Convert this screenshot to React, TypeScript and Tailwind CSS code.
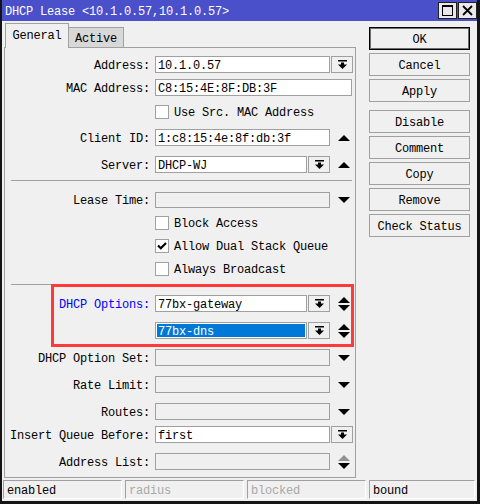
import React from "react";

const mono = "font-['Liberation_Mono','DejaVu_Sans_Mono',monospace] text-[12px] tracking-[-0.2px] leading-none";

function DropIcon() {
  return (
    <svg width="9" height="9" viewBox="0 0 9 9">
      <rect x="0" y="0" width="9" height="1.5" fill="#000" />
      <rect x="3" y="2.5" width="3" height="2.5" fill="#000" />
      <polygon points="0,4.5 9,4.5 4.5,9" fill="#000" />
    </svg>
  );
}

function DropButton() {
  return (
    <div className="ml-px flex h-[17px] w-[22px] items-center justify-center border border-[#a0a0a0] bg-[#f0f0f0]">
      <DropIcon />
    </div>
  );
}

function Up({ color = "#000" }: { color?: string }) {
  return (
    <svg width="12" height="6" viewBox="0 0 12 6">
      <polygon points="0,6 12,6 6,0" fill={color} />
    </svg>
  );
}

function Down({ color = "#000" }: { color?: string }) {
  return (
    <svg width="12" height="6" viewBox="0 0 12 6">
      <polygon points="0,0 12,0 6,6" fill={color} />
    </svg>
  );
}

type Side = "up" | "down" | "updown" | "updown-dim" | null;

function SideArrow({ kind }: { kind: Side }) {
  return (
    <div className="flex w-[26px] flex-col items-center justify-center gap-[2px] pl-[1px]">
      {kind === "up" && <Up />}
      {kind === "down" && <Down />}
      {kind === "updown" && (
        <>
          <Up />
          <Down />
        </>
      )}
      {kind === "updown-dim" && (
        <>
          <Up color="#8c948c" />
          <Down />
        </>
      )}
    </div>
  );
}

function Label({ text, blue }: { text: string; blue?: boolean }) {
  return (
    <div className={`w-[146px] shrink-0 pr-[1px] pt-[2px] text-right ${blue ? "text-[#0000ff]" : "text-black"}`}>
      {text ? `${text}:` : ""}
    </div>
  );
}

function Field({
  value,
  w,
  white = true,
  selected,
}: {
  value?: string;
  w: string;
  white?: boolean;
  selected?: boolean;
}) {
  return (
    <div
      className={`flex h-[17px] items-center border border-[#a0a0a0] ${w} ${
        white ? "bg-white" : "bg-[#f0f0f0]"
      }`}
    >
      {value && (
        <span
          className={`ml-[1px] flex h-[13px] items-center px-[1px] pt-[2px] ${
            selected ? "w-[148px] bg-[#0078d7] text-white" : "text-black"
          }`}
        >
          {value}
        </span>
      )}
    </div>
  );
}

function Check({ label, checked, mt }: { label: string; checked?: boolean; mt: string }) {
  return (
    <div className={`flex h-[17px] items-center ${mt}`}>
      <div className="w-[150px] shrink-0" />
      <div className="flex h-[14px] w-[14px] items-center justify-center border border-[#a0a0a0] bg-white">
        {checked && (
          <svg width="10" height="8" viewBox="0 0 10 8">
            <polyline points="1,3.5 3.8,6.3 9,1" fill="none" stroke="#000" strokeWidth="2.2" />
          </svg>
        )}
      </div>
      <span className="ml-[5px] pt-[2px] text-black">{label}</span>
    </div>
  );
}

function Separator({ mt }: { mt: string }) {
  return <div className={`ml-[6px] h-px w-[341px] bg-[#a0a0a0] ${mt}`} />;
}

function Btn({ text, primary, mt }: { text: string; primary?: boolean; mt?: string }) {
  return (
    <div
      className={`flex h-[23px] w-[101px] items-center justify-center bg-[#f0f0f0] pt-[2px] text-black ${
        primary ? "border border-black shadow-[inset_0_0_0_1px_#6e6e6e]" : "border border-[#a0a0a0]"
      } ${mt ?? ""}`}
    >
      {text}
    </div>
  );
}

function StatusCell({ text, dim, w }: { text: string; dim?: boolean; w: string }) {
  return (
    <div
      className={`flex h-[19px] items-center border-l border-t border-b border-r border-l-[#a0a0a0] border-t-[#a0a0a0] border-b-white border-r-white pl-[3px] pt-[2px] ${w} ${
        dim ? "text-[#a8a8a8]" : "text-black"
      }`}
    >
      {text}
    </div>
  );
}

export default function App() {
  return (
    <div
      className={`${mono} flex h-[504px] w-[480px] flex-col border-b-[3px] border-l-2 border-r-[3px] border-[#141414] bg-[#f0f0f0]`}
    >
      {/* title bar */}
      <div className="flex h-[21px] shrink-0 items-start justify-between bg-[#4a4fca] pl-[3px]">
        <span className="mt-[6px] text-white">DHCP Lease &lt;10.1.0.57,10.1.0.57&gt;</span>
        <div className="mt-[2px] flex gap-[1px]">
          <div className="flex h-[17px] w-[19px] items-center justify-center border border-[#202020] bg-[#ebe7ec]">
            <div className="h-[11px] w-[11px] border border-black border-t-2" />
          </div>
          <div className="flex h-[17px] w-[19px] items-center justify-center border border-[#202020] bg-[#ebe7ec]">
            <svg width="11" height="11" viewBox="0 0 11 11">
              <path d="M1 1 L10 10 M10 1 L1 10" stroke="#000" strokeWidth="1.8" />
            </svg>
          </div>
        </div>
      </div>

      {/* body */}
      <div className="flex h-[457px] shrink-0">
        <div className="ml-[2px] flex w-[352px] flex-col">
          {/* tabs */}
          <div className="flex h-[26px] items-end pl-[1px]">
            <div className="relative z-10 mb-[-1px] flex h-[25px] w-[64px] items-start justify-center border-l border-r border-t border-[#a0a0a0] bg-[#f0f0f0] pt-[6px] text-black">
              General
            </div>
            <div className="flex h-[20px] w-[55px] items-start justify-center border-r border-t border-[#a0a0a0] bg-[#d8d8d8] pt-[5px] text-black">
              Active
            </div>
          </div>

          {/* panel */}
          <div className="relative flex h-[431px] flex-col border border-[#a0a0a0]">
            <div className="flex h-[17px] items-center mt-[8px]">
              <Label text="Address" />
              <div className="ml-[4px] flex">
                <Field value="10.1.0.57" w="w-[175px]" />
                <DropButton />
              </div>
            </div>
            <div className="flex h-[17px] items-center mt-[6px]">
              <Label text="MAC Address" />
              <div className="ml-[4px] flex">
                <Field value="C8:15:4E:8F:DB:3F" w="w-[197px]" />
              </div>
            </div>
            <Check label="Use Src. MAC Address" mt="mt-[7px]" />
            <div className="flex h-[17px] items-center mt-[9px]">
              <Label text="Client ID" />
              <div className="ml-[4px] flex">
                <Field value="1:c8:15:4e:8f:db:3f" w="w-[175px]" />
                <SideArrow kind="up" />
              </div>
            </div>
            <div className="flex h-[17px] items-center mt-[10px]">
              <Label text="Server" />
              <div className="ml-[4px] flex">
                <Field value="DHCP-WJ" w="w-[152px]" />
                <DropButton />
                <SideArrow kind="up" />
              </div>
            </div>

            <Separator mt="mt-[7px]" />

            <div className="flex h-[16px] items-center mt-[11px]">
              <Label text="Lease Time" />
              <div className="ml-[4px] flex h-[16px]">
                <div className="h-[16px] w-[175px] border border-[#a0a0a0] bg-[#f0f0f0]" />
                <SideArrow kind="down" />
              </div>
            </div>
            <Check label="Block Access" mt="mt-[6px]" />
            <Check label="Allow Dual Stack Queue" checked mt="mt-[6px]" />
            <Check label="Always Broadcast" mt="mt-[6px]" />

            <Separator mt="mt-[7px]" />

            <div className="flex h-[17px] items-center mt-[10px]">
              <Label text="DHCP Options" blue />
              <div className="ml-[4px] flex">
                <Field value="77bx-gateway" w="w-[152px]" />
                <DropButton />
                <SideArrow kind="updown" />
              </div>
            </div>
            <div className="flex h-[17px] items-center mt-[10px]">
              <Label text="" />
              <div className="ml-[4px] flex">
                <Field value="77bx-dns" w="w-[152px]" selected />
                <DropButton />
                <SideArrow kind="updown" />
              </div>
            </div>
            <div className="flex h-[17px] items-center mt-[10px]">
              <Label text="DHCP Option Set" />
              <div className="ml-[4px] flex">
                <Field w="w-[175px]" white={false} />
                <SideArrow kind="down" />
              </div>
            </div>
            <div className="flex h-[17px] items-center mt-[10px]">
              <Label text="Rate Limit" />
              <div className="ml-[4px] flex">
                <Field w="w-[175px]" white={false} />
                <SideArrow kind="down" />
              </div>
            </div>
            <div className="flex h-[17px] items-center mt-[10px]">
              <Label text="Routes" />
              <div className="ml-[4px] flex">
                <Field w="w-[175px]" white={false} />
                <SideArrow kind="down" />
              </div>
            </div>
            <div className="flex h-[17px] items-center mt-[6px]">
              <Label text="Insert Queue Before" />
              <div className="ml-[4px] flex">
                <Field value="first" w="w-[175px]" />
                <DropButton />
              </div>
            </div>
            <div className="flex h-[17px] items-center mt-[10px]">
              <Label text="Address List" />
              <div className="ml-[4px] flex">
                <Field w="w-[175px]" white={false} />
                <SideArrow kind="updown-dim" />
              </div>
            </div>

            {/* highlight frame around the options rows */}
            <div className="pointer-events-none absolute left-[46px] top-[236px] h-[63px] w-[303px] border-[3px] border-[#ff3a3a]" />
          </div>
        </div>

        {/* action buttons */}
        <div className="ml-[13px] flex flex-col pt-[6px]">
          <Btn text="OK" primary />
          <Btn text="Cancel" mt="mt-[3px]" />
          <Btn text="Apply" mt="mt-[3px]" />
          <Btn text="Disable" mt="mt-[8px]" />
          <Btn text="Comment" mt="mt-[3px]" />
          <Btn text="Copy" mt="mt-[3px]" />
          <Btn text="Remove" mt="mt-[3px]" />
          <Btn text="Check Status" mt="mt-[3px]" />
        </div>
      </div>

      {/* status bar */}
      <div className="ml-[1px] mt-[2px] flex gap-[3px]">
        <StatusCell text="enabled" w="w-[119px]" />
        <StatusCell text="radius" dim w="w-[119px]" />
        <StatusCell text="blocked" dim w="w-[119px]" />
        <StatusCell text="bound" w="w-[106px]" />
      </div>
    </div>
  );
}
